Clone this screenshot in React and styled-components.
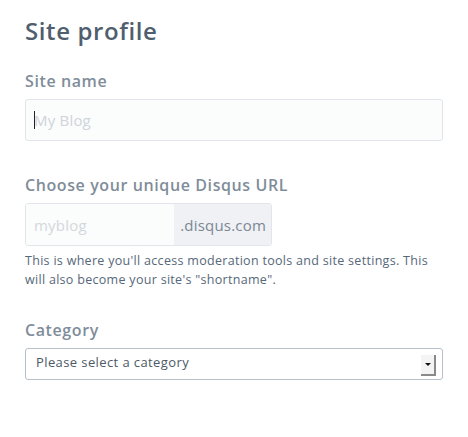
import React from "react";
import styled, { createGlobalStyle } from "styled-components";

const GlobalStyle = createGlobalStyle`
  body {
    margin: 0;
    background: #fff;
    font-family: "Open Sans", "Liberation Sans", sans-serif;
  }
`;

const Page = styled.div`
  width: 468px;
  padding: 15px 25px 0 25px;
  box-sizing: border-box;
`;

const Title = styled.h1`
  margin: 0 0 24px 0;
  font-size: 24px;
  font-weight: 600;
  line-height: 32px;
  letter-spacing: 0.6px;
  color: #4f5f6f;
`;

const Field = styled.div`
  margin-bottom: ${(p) => p.gap || 34}px;
`;

const Label = styled.label`
  display: block;
  margin-bottom: 8px;
  font-size: 16px;
  font-weight: 600;
  line-height: 20px;
  letter-spacing: 0.6px;
  color: #7f8d9a;
`;

const TextInput = styled.div`
  display: flex;
  align-items: center;
  height: 42px;
  width: 418px;
  box-sizing: border-box;
  padding-left: 8px;
  border: 1px solid #e2e5ea;
  border-radius: 3px;
  background: #fbfcfc;
  font-size: 15px;
  letter-spacing: 0.2px;
  color: #cfd4da;
`;

const Caret = styled.span`
  display: inline-block;
  width: 1px;
  height: 18px;
  background: #222;
  margin-right: -1px;
`;

const UrlGroup = styled.div`
  display: flex;
  width: 245px;
  height: 41px;
  border: 1px solid #e2e5ea;
  border-radius: 3px;
  overflow: hidden;
  font-size: 15px;
  letter-spacing: 0.2px;
`;

const UrlInput = styled.div`
  flex: 1;
  display: flex;
  align-items: center;
  padding-left: 8px;
  background: #fbfcfc;
  color: #d3d8dd;
`;

const Addon = styled.div`
  display: flex;
  align-items: center;
  padding: 0 5px 0 6px;
  background: #eff1f4;
  color: #7c8794;
`;

const Help = styled.p`
  margin: 5px 0 0 0;
  font-size: 12.5px;
  line-height: 19px;
  letter-spacing: 0.3px;
  color: #56687a;
`;

const Select = styled.div`
  position: relative;
  display: flex;
  align-items: center;
  width: 418px;
  height: 32px;
  box-sizing: border-box;
  padding: 0 0 4px 10px;
  border: 1px solid #b7bfca;
  border-radius: 3px;
  background: #fff;
  font-size: 13px;
  letter-spacing: 0.4px;
  color: #4e5966;
`;

const Arrow = styled.span`
  position: absolute;
  right: 6px;
  top: 6px;
  width: 15px;
  height: 21px;
  box-sizing: border-box;
  background: #f4f4f4;
  border-right: 2px solid #8a8a8a;
  border-bottom: 2px solid #8a8a8a;
  &::after {
    content: "";
    position: absolute;
    left: 4px;
    top: 8px;
    border-left: 3px solid transparent;
    border-right: 3px solid transparent;
    border-top: 3px solid #111;
  }
`;

export default function App() {
  return (
    <Page>
      <GlobalStyle />
      <Title>Site profile</Title>
      <Field gap={34}>
        <Label>Site name</Label>
        <TextInput>
          <Caret />
          My Blog
        </TextInput>
      </Field>
      <Field gap={31}>
        <Label>Choose your unique Disqus URL</Label>
        <UrlGroup>
          <UrlInput>myblog</UrlInput>
          <Addon>.disqus.com</Addon>
        </UrlGroup>
        <Help>
          This is where you'll access moderation tools and site settings. This
          will also become your site's "shortname".
        </Help>
      </Field>
      <Field>
        <Label>Category</Label>
        <Select>
          Please select a category
          <Arrow />
        </Select>
      </Field>
    </Page>
  );
}
